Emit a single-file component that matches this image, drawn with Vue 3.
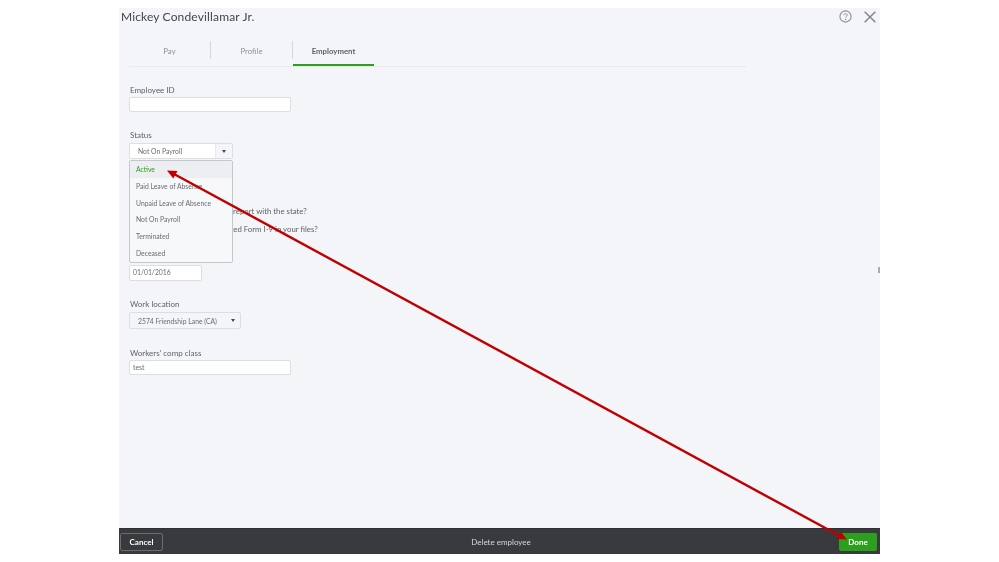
<template>
  <div class="page">
    <div class="panel">
      <header class="head">
        <h1>Mickey Condevillamar Jr.</h1>
        <div class="head-icons">
          <svg class="help" width="13" height="13" viewBox="0 0 13 13">
            <circle cx="6.5" cy="6.5" r="5.6" fill="none" stroke="#8d9096" stroke-width="1.1" />
            <path d="M4.9 5.2c0-2 3.3-2 3.3 0 0 1.2-1.6 1.2-1.6 2.5" fill="none" stroke="#8d9096" stroke-width="1" />
            <circle cx="6.6" cy="9.4" r=".7" fill="#8d9096" />
          </svg>
          <svg width="12" height="12" viewBox="0 0 12 12">
            <path d="M.7.7l10.6 10.6M11.3.7L.7 11.3" stroke="#7f8287" stroke-width="1.4" fill="none" />
          </svg>
        </div>
      </header>

      <nav class="tabs">
        <div v-for="tab in tabs" :key="tab" class="tab" :class="{ active: tab === 'Employment' }">
          {{ tab }}
        </div>
      </nav>

      <main class="form">
        <label class="lbl first">Employee ID</label>
        <div class="input wide"></div>

        <label class="lbl status">Status</label>
        <div class="status-wrap">
          <div class="select status-select">
            <span>Not On Payroll</span>
            <span class="caret-box"><i class="caret"></i></span>
          </div>
          <ul class="menu">
            <li v-for="opt in statuses" :key="opt" :class="{ on: opt === 'Active' }">{{ opt }}</li>
          </ul>
        </div>

        <p class="question q1">Have you filed the employee's report with the state?</p>
        <p class="question q2">Do you have a signed, completed Form I-9 in your files?</p>
        <div class="input date">01/01/2016</div>

        <label class="lbl work">Work location</label>
        <div class="select work-select">
          <span>2574 Friendship Lane (CA)</span>
          <i class="caret"></i>
        </div>

        <label class="lbl comp">Workers' comp class</label>
        <div class="input wide comp-input">test</div>
      </main>

      <footer class="foot">
        <button class="cancel">Cancel</button>
        <span class="delete">Delete employee</span>
        <button class="done">Done</button>
      </footer>

      <span class="handle"></span>
    </div>

    <svg class="arrow" width="999" height="562" viewBox="0 0 999 562">
      <line x1="174" y1="174" x2="840" y2="536" stroke="#c00000" stroke-width="2.4" />
      <path d="M167 170.5l10.5 .6-4.2 7.4z" fill="#c00000" />
      <path d="M847 539.5l-10.5-.6 4.2-7.4z" fill="#c00000" />
    </svg>
  </div>
</template>

<script setup>
const tabs = ['Pay', 'Profile', 'Employment']
const statuses = ['Active', 'Paid Leave of Absence', 'Unpaid Leave of Absence', 'Not On Payroll', 'Terminated', 'Deceased']
</script>

<style>
html, body {
  margin: 0;
  background: #fff;
}
</style>

<style scoped>
.page {
  position: relative;
  width: 999px;
  height: 562px;
  overflow: hidden;
  padding: 8px 0 0 119px;
  box-sizing: border-box;
  font-family: Lato, "Open Sans", sans-serif;
  color: #5f6166;
  filter: blur(0.35px);
}

.panel {
  position: relative;
  width: 761px;
  height: 546px;
  background: #f4f5f8;
  display: flex;
  flex-direction: column;
}

.head {
  height: 17px;
  display: flex;
  justify-content: space-between;
  align-items: center;
  padding: 0 4px 0 2px;
}

.head h1 {
  margin: 0;
  font-size: 12px;
  font-weight: 400;
  color: #44464a;
  letter-spacing: .15px;
}

.head-icons {
  display: flex;
  align-items: center;
  gap: 12px;
}

.tabs {
  display: flex;
  width: 617px;
  height: 25px;
  margin: 16px 0 0 10px;
  border-bottom: 1px solid #e9eae6;
}

.tab {
  width: 81px;
  height: 18px;
  line-height: 21px;
  text-align: center;
  font-size: 7.8px;
  color: #8d9096;
  border-right: 1px solid #d4d7dc;
}

.tab.active {
  height: 25px;
  line-height: 21px;
  box-sizing: border-box;
  border-right: 0;
  border-bottom: 2px solid #2ca01c;
  font-weight: 700;
  color: #5f6166;
}

.form {
  flex: 1;
  padding-left: 10px;
  display: flex;
  flex-direction: column;
  align-items: flex-start;
}

.lbl {
  font-size: 8px;
  line-height: 10px;
  color: #5f6166;
  padding-left: 1px;
}

.lbl.first { margin-top: 18px; }
.lbl.status { margin-top: 18px; }
.lbl.work { margin-top: 18px; }
.lbl.comp { margin-top: 19px; }

.input, .select {
  box-sizing: border-box;
  background: #fff;
  border: 1px solid #dcdee2;
  border-radius: 2px;
  font-size: 6.8px;
  color: #6b6c72;
}

.input {
  margin-top: 2px;
  line-height: 13px;
  padding-left: 3px;
}

.wide {
  width: 162px;
  height: 15px;
}

.date {
  width: 73px;
  height: 16px;
  margin-top: 31px;
}

.select {
  display: flex;
  align-items: center;
  justify-content: space-between;
  margin-top: 3px;
  padding-left: 8px;
}

.status-wrap {
  position: relative;
}

.status-select {
  width: 104px;
  height: 16px;
  background: #fff;
}

.caret-box {
  width: 16px;
  height: 14px;
  display: flex;
  align-items: center;
  justify-content: center;
  background: #f4f5f8;
  border-left: 1px solid #e9eaed;
}

.caret {
  width: 0;
  height: 0;
  border: 2.5px solid transparent;
  border-top: 3px solid #44464a;
  border-bottom: 0;
}

.work-select {
  width: 112px;
  height: 17px;
  padding-right: 5px;
  background: #f4f5f8;
}

.menu {
  position: absolute;
  top: 20px;
  left: 0;
  z-index: 2;
  width: 104px;
  height: 103px;
  margin: 0;
  padding: 0;
  box-sizing: border-box;
  list-style: none;
  background: #f7f8fa;
  border: 1px solid #c4c7cc;
  border-radius: 2px;
}

.menu li {
  height: 16.8px;
  line-height: 16.8px;
  padding-left: 6px;
  font-size: 6.8px;
  color: #6b6c72;
}

.menu li.on {
  background: #eceef1;
  color: #2ca01c;
}

.question {
  margin: 0;
  font-size: 7.8px;
  line-height: 10px;
  white-space: nowrap;
}

.q1 { margin-top: 47px; }
.q2 { margin-top: 8px; }

.foot {
  height: 26px;
  flex-shrink: 0;
  display: flex;
  align-items: center;
  justify-content: space-between;
  padding: 0 3px 0 1px;
  background: #393a3d;
  border-top: 1px solid #2f3033;
  box-sizing: border-box;
}

.foot button {
  height: 18px;
  border-radius: 2px;
  font-family: inherit;
  font-size: 8px;
  font-weight: 700;
  color: #fff;
  padding: 0;
}

.cancel {
  width: 43px;
  background: transparent;
  border: 1px solid #6b6c72;
}

.done {
  width: 38px;
  background: #2ca01c;
  border: 0;
}

.delete {
  font-size: 8px;
  color: #d4d7dc;
}

.handle {
  position: absolute;
  right: 0;
  top: 259px;
  width: 2px;
  height: 6px;
  background: #a9acb1;
}

.arrow {
  position: absolute;
  top: 0;
  left: 0;
  z-index: 5;
}
</style>
